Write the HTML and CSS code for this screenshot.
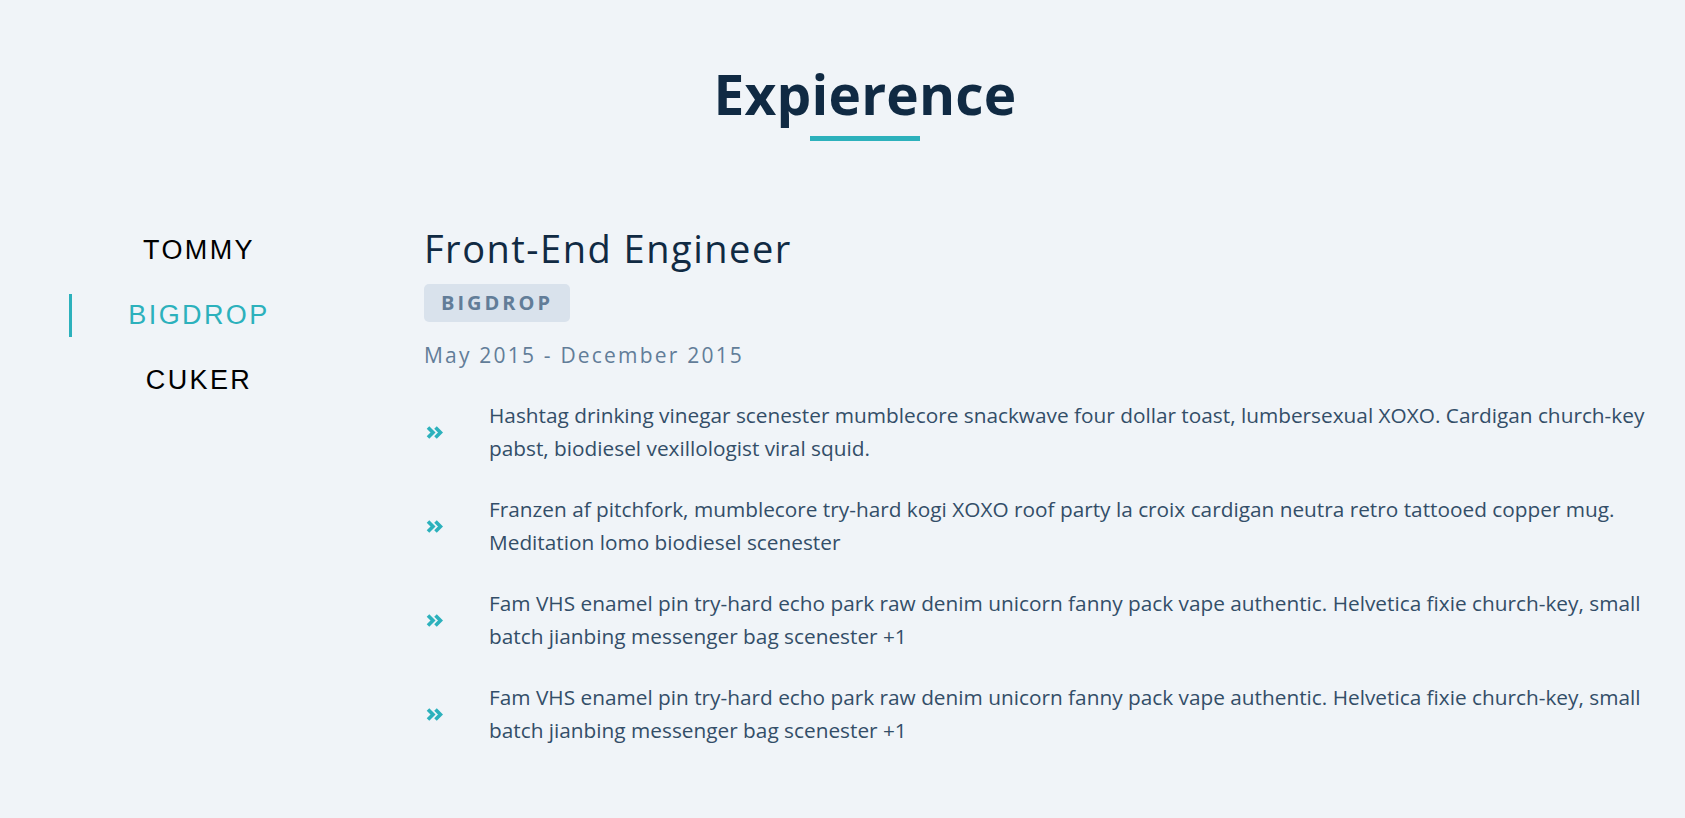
FILE: index.html
```html
<!DOCTYPE html>
<html lang="en">
<head>
<meta charset="utf-8">
<title>Expierence</title>
<link rel="stylesheet" href="styles.css">
</head>
<body>
<section class="experience">
  <header class="section-title">
    <h2>Expierence</h2>
    <div class="underline"></div>
  </header>
  <div class="jobs">
    <nav class="companies">
      <button class="company">TOMMY</button>
      <button class="company active">BIGDROP</button>
      <button class="company">CUKER</button>
    </nav>
    <article class="job">
      <h3>Front-End Engineer</h3>
      <span class="badge">BIGDROP</span>
      <p class="dates">May 2015 - December 2015</p>
      <ul class="duties">
        <li class="duty">
          <svg class="chev" viewBox="0 0 17 13" width="17" height="13"><path d="M2 1.5 L7 6.5 L2 11.5 M9.5 1.5 L14.5 6.5 L9.5 11.5" fill="none" stroke="#2cb1bc" stroke-width="3.6"/></svg>
          <p>Hashtag drinking vinegar scenester mumblecore snackwave four dollar toast, lumbersexual XOXO. Cardigan church-key pabst, biodiesel vexillologist viral squid.</p>
        </li>
        <li class="duty">
          <svg class="chev" viewBox="0 0 17 13" width="17" height="13"><path d="M2 1.5 L7 6.5 L2 11.5 M9.5 1.5 L14.5 6.5 L9.5 11.5" fill="none" stroke="#2cb1bc" stroke-width="3.6"/></svg>
          <p>Franzen af pitchfork, mumblecore try-hard kogi XOXO roof party la croix cardigan neutra retro tattooed copper mug. Meditation lomo biodiesel scenester</p>
        </li>
        <li class="duty">
          <svg class="chev" viewBox="0 0 17 13" width="17" height="13"><path d="M2 1.5 L7 6.5 L2 11.5 M9.5 1.5 L14.5 6.5 L9.5 11.5" fill="none" stroke="#2cb1bc" stroke-width="3.6"/></svg>
          <p>Fam VHS enamel pin try-hard echo park raw denim unicorn fanny pack vape authentic. Helvetica fixie church-key, small batch jianbing messenger bag scenester +1</p>
        </li>
        <li class="duty">
          <svg class="chev" viewBox="0 0 17 13" width="17" height="13"><path d="M2 1.5 L7 6.5 L2 11.5 M9.5 1.5 L14.5 6.5 L9.5 11.5" fill="none" stroke="#2cb1bc" stroke-width="3.6"/></svg>
          <p>Fam VHS enamel pin try-hard echo park raw denim unicorn fanny pack vape authentic. Helvetica fixie church-key, small batch jianbing messenger bag scenester +1</p>
        </li>
      </ul>
    </article>
  </div>
</section>
</body>
</html>
```

FILE: styles.css
```css
* { box-sizing: border-box; }

html, body {
  margin: 0;
  padding: 0;
  background: #f0f4f8;
}

body {
  font-family: "Open Sans", "Noto Sans", sans-serif;
  color: #334e68;
}

.experience {
  padding: 66px 24px 0 69px;
}

.section-title {
  display: flex;
  flex-direction: column;
  align-items: center;
}

.section-title h2 {
  margin: 0;
  font-size: 55px;
  line-height: 56px;
  font-weight: 700;
  color: #102a43;
  letter-spacing: 0.2px;
}

.underline {
  width: 110px;
  height: 5px;
  margin-top: 14px;
  background: #2cb1bc;
}

.jobs {
  display: flex;
  margin-top: 88px;
}

.companies {
  width: 257px;
  flex-shrink: 0;
  display: flex;
  flex-direction: column;
  gap: 22px;
  margin-right: 98px;
}

.company {
  display: block;
  width: 100%;
  height: 43px;
  padding: 0;
  border: 0;
  border-left: 3px solid transparent;
  background: transparent;
  font-family: "Liberation Sans", Arial, sans-serif;
  font-size: 27px;
  line-height: 43px;
  letter-spacing: 2.4px;
  color: #000;
  text-align: center;
  cursor: pointer;
}

.company.active {
  border-left-color: #2cb1bc;
  color: #2cb1bc;
}

.job {
  flex: 1;
  min-width: 0;
}

.job h3 {
  margin: 0;
  font-size: 38px;
  line-height: 39px;
  font-weight: 400;
  color: #102a43;
  letter-spacing: 1.5px;
}

.badge {
  display: inline-block;
  margin-top: 16px;
  padding: 7px 17px;
  background: #d9e2ec;
  border-radius: 5px;
  font-size: 20px;
  line-height: 24px;
  font-weight: 700;
  letter-spacing: 3px;
  color: #627d98;
}

.dates {
  margin: 22px 0 0;
  font-size: 21px;
  line-height: 22px;
  letter-spacing: 2.2px;
  color: #627d98;
}

.duties {
  list-style: none;
  margin: 33px 0 0;
  padding: 0;
}

.duty {
  display: flex;
  align-items: center;
  margin-bottom: 28px;
}

.chev {
  flex-shrink: 0;
  margin-left: 2px;
  margin-right: 46px;
}

.duty p {
  margin: 0;
  font-size: 20.8px;
  line-height: 33px;
  color: #334e68;
}
```
